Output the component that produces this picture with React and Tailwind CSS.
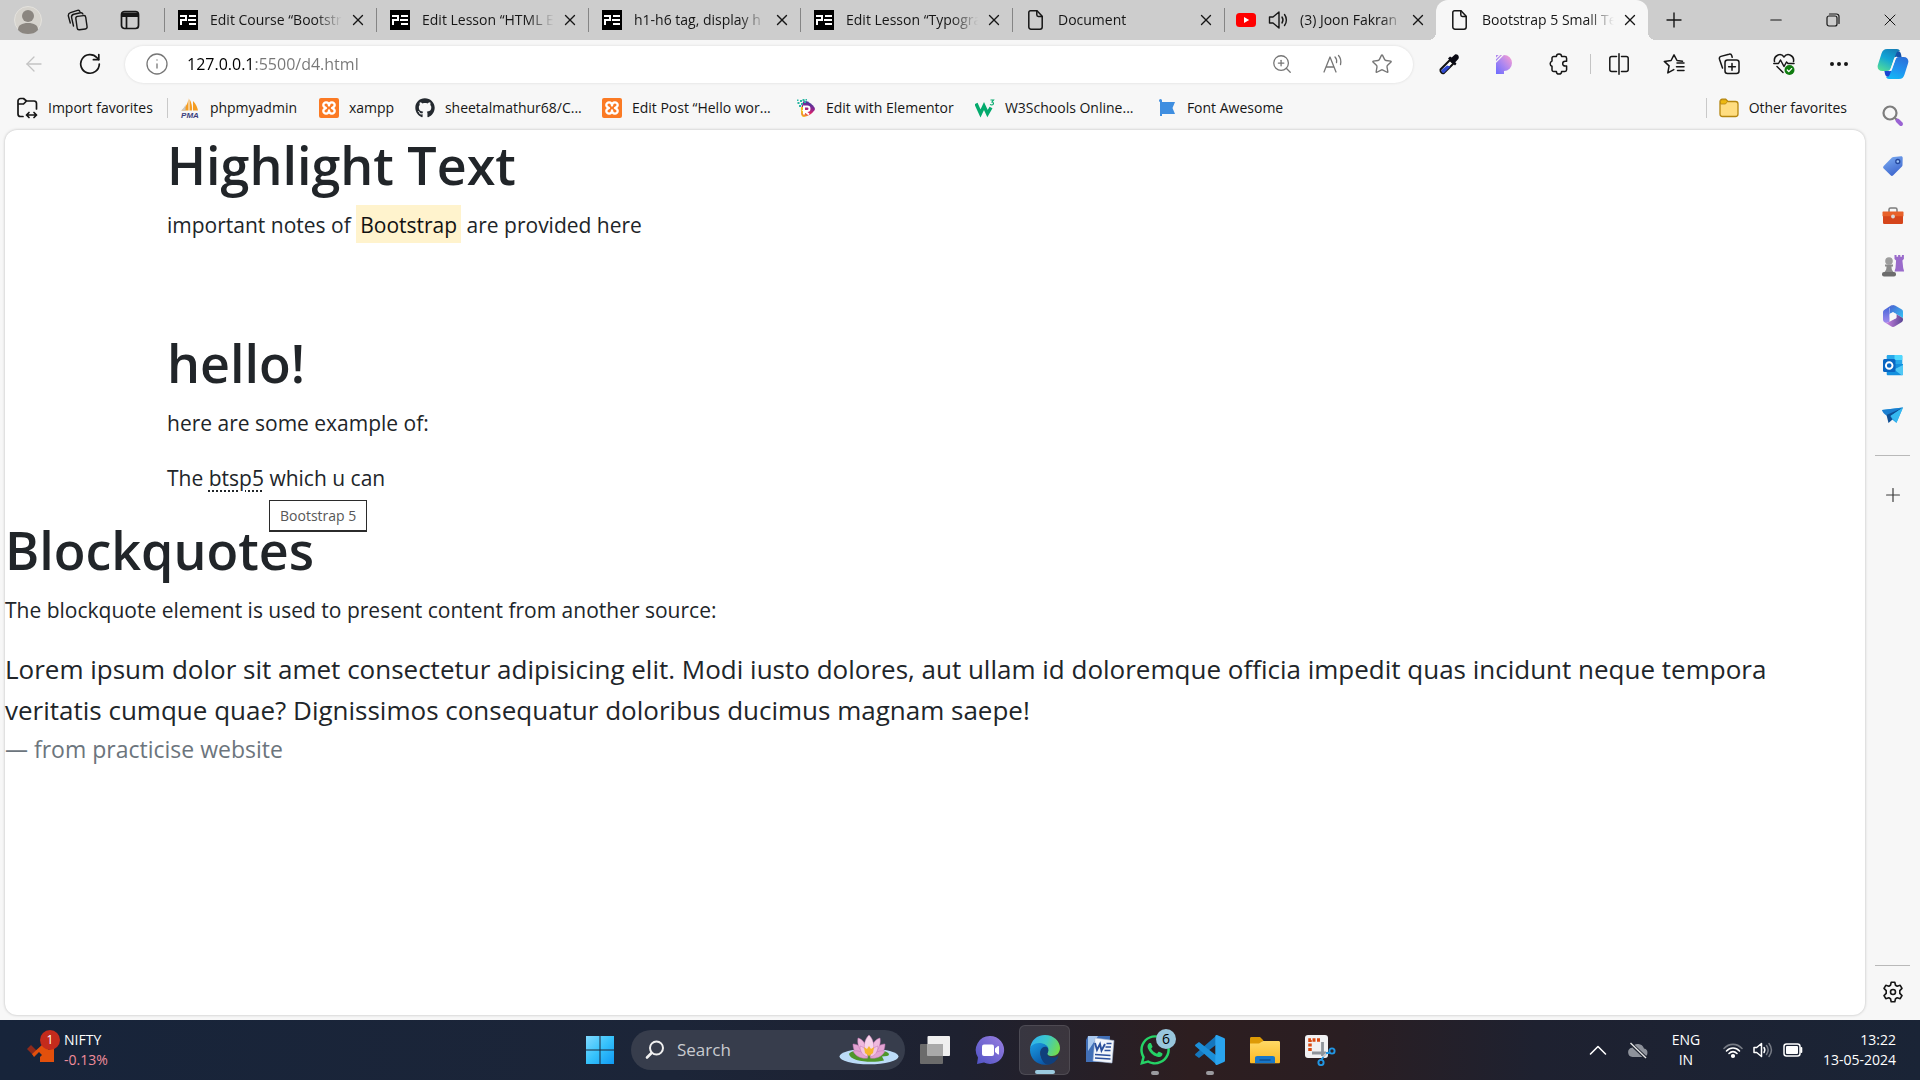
import { X, Plus, Minus, ArrowLeft, Info, ZoomIn, Star, MoreHorizontal } from "lucide-react";
import { FaGithub, FaWhatsapp } from "react-icons/fa";

const line = { fill: "none", stroke: "currentColor", strokeLinecap: "round", strokeLinejoin: "round" };

/* ---------- tab strip icons ---------- */

const Avatar = () => (
  <svg viewBox="0 0 28 28" className="size-7">
    <circle cx="14" cy="14" r="13.5" fill="#d6d3cd" stroke="#e4e2dd" />
    <circle cx="14" cy="10" r="6" fill="#8b8680" />
    <path d="M4 24c0-5 4-7 10-7s10 2 10 7c-3 3-6 4-10 4s-7-1-10-4z" fill="#8b8680" />
  </svg>
);

const Workspaces = () => (
  <svg viewBox="0 0 22 22" className="size-[22px]" {...line} strokeWidth="1.4">
    <rect x="9.5" y="7" width="10" height="13.5" rx="2" transform="rotate(-8 14 14)" />
    <path d="M6.5 17 4.6 8.600C4.300 7 5 5.600 6.800 5.200L13.500 3.800c1.200-.2 2 .2 2.400 1.200" />
    <path d="M3.300 14 1.500 7.500C1 5.600 1.700 4.200 3.500 3.600L10.500 1.400c1.200-.3 2 0 2.400 1" />
  </svg>
);

const TabActions = () => (
  <svg viewBox="0 0 20 20" className="size-5" {...line} strokeWidth="1.700">
    <rect x="1.500" y="1.500" width="17" height="17" rx="3" />
    <path d="M2 3.500h16v2.500H2z" fill="currentColor" strokeWidth="2" />
    <path d="M6.500 7v11" />
  </svg>
);

const PeLogo = () => (
  <svg viewBox="0 0 20 20" className="size-5 shrink-0">
    <rect width="20" height="20" fill="#000" />
    <path d="M2 5h7v6H4v4H2V9h5V7H2z" fill="#fff" />
    <path d="M11 5h7v2h-7zM10 9h8v2h-8zM11 13h7v2h-7z" fill="#fff" />
  </svg>
);

const PageIcon = () => (
  <svg viewBox="0 0 20 20" className="size-5 shrink-0" {...line} strokeWidth="1.500">
    <path d="M4.500.8h6.500l5.200 5.400v10.800a2.200 2.200 0 0 1-2.200 2.200H5a2.200 2.200 0 0 1-2.200-2.200V2.500c0-1 .7-1.700 1.700-1.700z" />
    <path d="M10.800 1v3.700c0 1 .6 1.700 1.600 1.700H16" />
  </svg>
);

const YouTube = () => (
  <svg viewBox="0 0 20 20" className="size-5 shrink-0">
    <rect y="3" width="20" height="14" rx="3.500" fill="#f00" />
    <path d="m8 7 5.200 3L8 13z" fill="#fff" />
  </svg>
);

const Speaker = () => (
  <svg viewBox="0 0 22 22" className="size-[22px] shrink-0" {...line} strokeWidth="1.400">
    <path d="M1.500 8v6h3.500l6 5V3L5 8z" />
    <path d="M14 8c1.200 1.800 1.200 4.200 0 6M16.500 5.500c2.500 3.200 2.500 7.800 0 11" />
  </svg>
);

/* ---------- toolbar icons ---------- */

const Reload = () => (
  <svg viewBox="0 0 22 22" className="size-[22px]" {...line} strokeWidth="1.700">
    <path d="M20.300 11A9.300 9.300 0 1 1 18 4.800l1.500 1.700" />
    <path d="M19.800 1.500v5.200h-5.400" />
  </svg>
);

const ReadAloud = () => (
  <svg viewBox="0 0 22 22" className="size-[22px]" {...line} strokeWidth="1.300">
    <path d="M2 19 8 4l6 15M4 14h8" />
    <path d="M13 4c1.500 1.500 1.900 3.500 1.500 5.500M16.500 2.500c2.200 2.500 2.800 5.500 2 9" />
  </svg>
);

const Eyedropper = () => (
  <svg viewBox="0 0 22 22" className="size-[22px]">
    <path d="M2.500 16.500 12 7l3.500 3.500-9.500 9.500c-2 1-4-1.500-3.500-3.500z" fill="#fff" stroke="#111" strokeWidth="2" />
    <path d="M3.500 17 9 12.500l3.500 1L6 20c-1.500.5-3-1.500-2.500-3z" fill="#2f49d1" />
    <path d="m10 5.500 7 7 1.500-1.700-1.200-1.600 3-3.200c1.500-2-.3-5.500-3.300-4.500l-3.300 3-1.700-1z" fill="#0a0a14" />
  </svg>
);

const PurpleP = () => (
  <svg viewBox="0 0 22 22" className="size-[22px]">
    <defs>
      <linearGradient id="pp" x1="0" y1="1" x2="1" y2="0">
        <stop offset="0" stopColor="#6a6bff" />
        <stop offset=".5" stopColor="#b088ef" />
        <stop offset="1" stopColor="#ff9fcf" />
      </linearGradient>
    </defs>
    <path d="M3 2h8a8 8 0 0 1 0 16v3H3z" fill="url(#pp)" />
    <path d="M2.500 6 7 1.500M2.500 9.500 10.500 1.500" stroke="#f7f7f7" strokeWidth="1.100" />
  </svg>
);

const Puzzle = () => (
  <svg viewBox="0 0 22 22" className="size-[22px]" {...line} strokeWidth="1.500">
    <path d="M8.400 3.600a2.600 2.600 0 0 1 5.200 0h3.300c1 0 1.700.7 1.700 1.700v3h-1.500a2.400 2.400 0 0 0 0 4.800h1.500v3.700c0 1-.7 1.700-1.700 1.700h-3.300a2.600 2.600 0 0 1-5.200 0H5.700c-1 0-1.700-.7-1.700-1.700v-3.600a2.700 2.700 0 0 1 0-5.100V5.300c0-1 .7-1.700 1.700-1.700z" />
  </svg>
);

const SplitScreen = () => (
  <svg viewBox="0 0 22 22" className="size-[22px]" {...line} strokeWidth="1.500">
    <path d="M8.500 3.500H3.800c-1.200 0-2 .8-2 2v11c0 1.200.8 2 2 2h4.700M13.500 3.500h4.700c1.200 0 2 .8 2 2v11c0 1.200-.8 2-2 2h-4.700M11 .8v20.400" />
  </svg>
);

const FavoritesIcon = () => (
  <svg viewBox="0 0 22 22" className="size-[22px]" {...line} strokeWidth="1.500">
    <path d="M19.500 8.200 14 7.500l-3-5.700-2.900 5.700-6.800.9 4.800 4.500-1.300 7 6-3.300" />
    <path d="M14 11.500h7M13.500 15.300h7.500M14.500 19h6.500" transform="translate(0 -1.500)" />
  </svg>
);

const Collections = () => (
  <svg viewBox="0 0 22 22" className="size-[22px]" {...line} strokeWidth="1.500">
    <rect x="7" y="7" width="14" height="13.500" rx="2.500" />
    <path d="M14 10.500v6.700M10.600 13.800h6.800" />
    <path d="M4.500 15 1.500 6.200c-.4-1.300.1-2.400 1.400-2.800L11 1.200c1.300-.4 2.400.2 2.800 1.500l.4 1.500" />
  </svg>
);

const Essentials = () => (
  <svg viewBox="0 0 22 22" className="size-[22px]" {...line} strokeWidth="1.500">
    <path d="M1.500 8.500c-1.200-6 6.200-9.300 9.500-4.500 3.300-4.800 10.700-1.500 9.500 4.500M4 13.500l6 6" />
    <path d="M.8 10.500h4.700L7.500 7l3.500 6.500L13.500 9l1.500 1.500h6" />
    <circle cx="16.500" cy="17" r="5" fill="#107c10" stroke="none" />
    <path d="m14.300 17 1.500 1.600 2.800-3" stroke="#fff" strokeWidth="1.300" />
  </svg>
);

const Copilot = () => (
  <svg viewBox="0 0 32 32" className="size-8">
    <defs>
      <linearGradient id="cpa" x1=".7" y1="0" x2=".2" y2="1">
        <stop offset="0" stopColor="#1680b8" />
        <stop offset=".45" stopColor="#12a5d6" />
        <stop offset="1" stopColor="#52dc98" />
      </linearGradient>
      <linearGradient id="cpb" x1=".8" y1="0" x2=".4" y2="1">
        <stop offset="0" stopColor="#2b6fd8" />
        <stop offset=".6" stopColor="#2094f0" />
        <stop offset="1" stopColor="#14b4f4" />
      </linearGradient>
    </defs>
    <path d="M19 3h1.500c2 0 3 1 3.500 3l.6 3H17z" fill="#1552a8" />
    <path d="M13 29h-1.500c-2 0-3-1-3.500-3l-.6-3H15z" fill="#1a46d2" />
    <path d="M10 1h10c1.500 0 2.300.8 3 2-2-.3-3.400 1-4 3l-5 13.500c-.8 2.500-2 3.500-4 3.500H5.500c-4 0-5.700-3-4.500-6.500L4.500 5.500C5.500 2.500 7 1 10 1z" fill="url(#cpa)" />
    <path d="M22 31H12c-1.500 0-2.300-.8-3-2 2 .3 3.400-1 4-3l5-13.500C18.800 10 20 9 22 9h4.500c4 0 5.700 3 4.500 6.500l-3.500 11c-1 3-2.500 4.500-5.500 4.500z" fill="url(#cpb)" />
    <path d="M17 10.500c.5-1.200 1.600-1.700 3.200-1.700l-1.400 2-3.800 10.700c-.4 1.200-1.200 1.700-2.700 1.700l1.300-2z" fill="#f7f7f7" />
  </svg>
);

/* ---------- favorites bar icons ---------- */

const ImportFolder = () => (
  <svg viewBox="0 0 22 22" className="size-[22px] shrink-0" {...line} strokeWidth="1.700">
    <path d="M7 19.500H4.500a2.500 2.500 0 0 1-2.500-2.500V4a2.500 2.500 0 0 1 2.500-2.500h3l3 2.500H18a2.500 2.500 0 0 1 2.500 2.500V12M2 7h5.500l2.500-2.500" />
    <path d="M10.500 18h10M13 15.500 10.500 18l2.500 2.500M18 15.500l2.500 2.500-2.500 2.500" />
  </svg>
);

const PhpMyAdmin = () => (
  <svg viewBox="0 0 20 20" className="size-5 shrink-0">
    <path d="M8.500 0C8 6 5 10 1.500 12.500h7zM9.500 1c2 3.500 3 8 2.500 11.500H9.500zM13 3c3 3 4.500 6.500 5 9.500h-5z" fill="#f59d22" />
    <path d="M5.500 6C5 9 3 11 1 12.500h4.500z" fill="#c9c6bd" />
    <text x="10" y="19.500" textAnchor="middle" fontSize="8" fontWeight="700" fontStyle="italic" fill="#3d3f7c" fontFamily="Liberation Sans, sans-serif">PMA</text>
  </svg>
);

const Xampp = () => (
  <svg viewBox="0 0 20 20" className="size-5 shrink-0">
    <rect width="20" height="20" rx="2" fill="#fb7a24" />
    <path
      d="M10 7.500C10 3.500 4.300 3.500 4.300 7c0 1.500 1 2.200 2.700 3-1.700.8-2.700 1.500-2.700 3 0 3.500 5.700 3.500 5.700-.5 0 4 5.700 4 5.700.5 0-1.500-1-2.200-2.700-3 1.700-.8 2.700-1.500 2.700-3 0-3.500-5.700-3.500-5.700.5z"
      fill="none"
      stroke="#fff"
      strokeWidth="2.300"
      strokeLinejoin="round"
    />
  </svg>
);

const Elementor = () => (
  <svg viewBox="0 0 20 20" className="size-5 shrink-0">
    <defs>
      <linearGradient id="el" x1=".6" y1="0" x2=".3" y2="1">
        <stop offset="0" stopColor="#2d3f9e" />
        <stop offset=".4" stopColor="#8a2390" />
        <stop offset=".7" stopColor="#dd2466" />
        <stop offset="1" stopColor="#f6b21b" />
      </linearGradient>
    </defs>
    <path d="M8 2.500c5 1 8.500 4 10.500 7 .5 1 .5 2 0 2.800-2 3-6 6-10.500 6.700-2 0-3-2-3-4L6 6z" fill="url(#el)" />
    <path d="M5 9h2v6l-1 1.500c-1-2-1.500-5-1-7.500z" fill="#f0c020" />
    <path d="M1.500 4h2v2h-2zM4 2h2v2H4zM6.500 1h2v2h-2zM3 7h2v2H3zM5 5h2v2H5zM8 3h2v2H8zM1 1.500h1.500V3H1zM9.500 1H11v1.500H9.500z" fill="#2cb7a4" />
    <path d="M8 16.500V8.500h3.200a2.300 2.300 0 0 1 0 4.600H8.500l4.500 3.400" fill="none" stroke="#fff" strokeWidth="2" />
  </svg>
);

const W3 = () => (
  <svg viewBox="0 0 20 20" className="size-5 shrink-0">
    <path d="m1 5.500 4.500 10L9 8l3.500 7.500L16 9.500" fill="none" stroke="#04aa6d" strokeWidth="3.400" />
    <path d="M15.500 2h3l-1.500 2c2 .2 2 3-.3 3-.7 0-1.200-.2-1.500-.8" fill="none" stroke="#04aa6d" strokeWidth="1.200" />
  </svg>
);

const Flag = () => (
  <svg viewBox="0 0 20 20" className="size-5 shrink-0">
    <path d="M2 2.500a1.500 1.500 0 0 1 3 0V4h13l-2.500 6 2.500 6H5v2H3V4a1.500 1.500 0 0 1-1-1.500z" fill="#3f8ee0" />
  </svg>
);

const YellowFolder = () => (
  <svg viewBox="0 0 20 20" className="size-5 shrink-0">
    <path d="M1 5V3.500A2.300 2.300 0 0 1 3.300 1.200h3.400L9 3.500h7.500A2.500 2.500 0 0 1 19 6v10a2.500 2.500 0 0 1-2.500 2.500h-13A2.500 2.500 0 0 1 1 16z" fill="#ffdd80" stroke="#b5860f" strokeWidth="1.300" />
    <path d="M1.500 6V3.500c0-1 .8-1.800 1.800-1.800h3.200L8.500 3.500 6.500 6z" fill="#edb80f" stroke="#b5860f" strokeWidth=".8" />
  </svg>
);

/* ---------- sidebar icons ---------- */

const SideSearch = () => (
  <svg viewBox="0 0 22 22" className="size-[22px]">
    <path d="m13 13 2 2" stroke="#7d7d7d" strokeWidth="2.200" />
    <path d="m15.500 15.500 3.500 3.500" stroke="#9a63d3" strokeWidth="4" strokeLinecap="round" />
    <circle cx="8" cy="8" r="6.500" fill="none" stroke="#7d7d7d" strokeWidth="2.200" />
  </svg>
);

const Tag = () => (
  <svg viewBox="0 0 22 22" className="size-[22px]">
    <defs>
      <linearGradient id="tg" x1="0" y1="0" x2=".5" y2="1">
        <stop offset="0" stopColor="#7fb0f3" />
        <stop offset="1" stopColor="#3f68cf" />
      </linearGradient>
    </defs>
    <path d="M11.500 2 19 1.300c1.200 0 1.700.6 1.700 1.700L20.500 10c0 .6-.3 1.300-.8 1.800l-8.500 8.500c-.8.800-1.800.8-2.600 0L1.700 13.500c-.8-.8-.8-1.800 0-2.600L10 2.600c.4-.4.9-.6 1.500-.6z" fill="url(#tg)" />
    <circle cx="15.800" cy="6.500" r="2" fill="#9cc3f8" stroke="#24479c" strokeWidth="1.300" />
  </svg>
);

const Toolbox = () => (
  <svg viewBox="0 0 22 22" className="size-[22px]">
    <path d="M7 7V4.500c0-1 .6-1.600 1.600-1.600h4.800c1 0 1.600.6 1.600 1.600V7" fill="none" stroke="#7c7c7c" strokeWidth="1.500" />
    <path d="M1 11h20v6.500c0 1-.6 1.600-1.600 1.600H2.600c-1 0-1.600-.6-1.600-1.600z" fill="#d5451b" />
    <path d="M1.500 6.500h19c.6 0 1 .4 1 1v3.700H.5V7.500c0-.6.4-1 1-1z" fill="#e8612a" />
    <circle cx="11" cy="11.500" r="1.900" fill="#d8d8d8" />
  </svg>
);

const Chess = () => (
  <svg viewBox="0 0 22 22" className="size-[22px]">
    <path d="M12.500 0h2v1.800h1.600V0h2.200v1.800h1.600V0h2v4l-1.500 1.500.8 7.500 1 3.500H12.500l1-3.500.6-7.500L12.500 4z" fill="#9a6bcb" />
    <circle cx="7" cy="6" r="3.800" fill="#9d9d9d" />
    <path d="M3 9.500h8v2H9.500c0 2.500.5 4 2 5.500H2.500c1.500-1.500 2-3 2-5.500H3z" fill="#8b8b8b" />
    <rect y="17" width="14" height="4.500" rx="2" fill="#6c6c6c" />
  </svg>
);

const M365 = () => (
  <svg viewBox="0 0 22 22" className="size-[22px]">
    <defs>
      <linearGradient id="m1" x1="0" y1="0" x2="1" y2="1">
        <stop offset="0" stopColor="#4b5fd0" />
        <stop offset="1" stopColor="#33c5f6" />
      </linearGradient>
      <linearGradient id="m2" x1="0" y1="0" x2="1" y2="0">
        <stop offset="0" stopColor="#cf86e4" />
        <stop offset="1" stopColor="#5a4594" />
      </linearGradient>
      <linearGradient id="m3" x1="0" y1="0" x2="0" y2="1">
        <stop offset="0" stopColor="#3a63d6" />
        <stop offset="1" stopColor="#a58bee" />
      </linearGradient>
    </defs>
    <path d="M11 0c.7 0 1.300.2 2 .6l6.500 3.700c1 .6 1.500 1.400 1.500 2.700v6l-6-3.500L11 7 7.500 9 8 2z" fill="url(#m1)" />
    <path d="M11 0 8.500 2C7.800 2.700 7.500 3.300 7.500 4.500V17L4 18l-1.500-.8C1.500 16.500 1 15.700 1 14.500V7.500c0-1.200.5-2 1.500-2.700L9 .6C9.700.2 10.300 0 11 0z" fill="url(#m3)" />
    <path d="M3 17.500c1.500.5 3 .2 4.500-.8L14.500 13V9.200L20 12.500c1 .7 1 1.200 1 2 0 1.200-.5 2-1.500 2.700L13 21.300c-1.300.8-2.700.8-4 0z" fill="url(#m2)" />
    <circle cx="11" cy="11" r="3.300" fill="#f7f7f7" />
  </svg>
);

const Outlook = () => (
  <svg viewBox="0 0 22 22" className="size-[22px]">
    <path d="M6 0h13c.8 0 1.300.5 1.300 1.300V10H4.700V1.300C4.700.5 5.200 0 6 0z" fill="#28a8ea" />
    <path d="M12.500 0H19c.8 0 1.300.5 1.300 1.300V5h-7.800z" fill="#50d9ff" />
    <path d="M4.700 9H21v10c0 .8-.5 1.300-1.300 1.300H6c-.8 0-1.300-.5-1.300-1.300z" fill="#1490df" />
    <path d="M21 10v9c0 .8-.4 1.300-1.300 1.300L12 14.500z" fill="#50c8f5" />
    <rect x="1" y="4" width="12.500" height="13" rx="1.500" fill="#0a66c2" />
    <circle cx="7.200" cy="10.500" r="3.300" fill="none" stroke="#fff" strokeWidth="1.900" />
  </svg>
);

const Plane = () => (
  <svg viewBox="0 0 22 22" className="size-[22px]">
    <path d="m0 5 21-2.500L14.500 18l-5-4z" fill="#2aa5e8" />
    <path d="M0 5c.5 2 2 4 4.500 5.500L21 2.500z" fill="#1b7fd0" />
    <path d="m4.500 10 2 8 4-3.500L8.500 11 21 2.500z" fill="#0f4f94" />
    <path d="M21 2.500 8.500 11l6 6.500z" fill="#36b9f0" />
  </svg>
);

const Gear = () => (
  <svg viewBox="0 0 22 22" className="size-[22px]" {...line} strokeWidth="1.600">
    <path d="M9.200 1.200h3.600l.7 3 1.700 1 3-.9 1.800 3.100-2.200 2.200v2.800l2.200 2.200-1.800 3.100-3-.9-1.700 1-.7 3H9.200l-.7-3-1.700-1-3 .9L2 14.600l2.200-2.200V9.600L2 7.400l1.800-3.100 3 .9 1.700-1z" />
    <circle cx="11" cy="11" r="2.500" />
  </svg>
);

/* ---------- taskbar icons ---------- */

const Stocks = () => (
  <svg viewBox="0 0 32 30" className="h-[30px] w-8">
    <path d="m1 14 4-4 6 6-4 4z" fill="#8e2a1b" />
    <path d="m6 19 11-10 6 6 5-4v16H14v-5l2-2-3-3-5 5z" fill="#e2500c" />
  </svg>
);

const Start = () => (
  <svg viewBox="0 0 30 30" className="size-[30px]">
    <defs>
      <linearGradient id="wn" gradientUnits="userSpaceOnUse" x1="0" y1="0" x2="30" y2="30">
        <stop offset="0" stopColor="#86dbff" />
        <stop offset=".5" stopColor="#36c2fb" />
        <stop offset="1" stopColor="#0d96f2" />
      </linearGradient>
    </defs>
    <path d="M1 1h13.500v13.500H1zM15.500 1H29v13.500H15.500zM1 15.500h13.500V29H1zM15.500 15.500H29V29H15.500z" fill="url(#wn)" />
  </svg>
);

const SearchGlass = () => (
  <svg viewBox="0 0 20 20" className="size-5 shrink-0" {...line} strokeWidth="2">
    <circle cx="11.500" cy="8" r="6.500" />
    <path d="M6.500 13 2 17.500" strokeWidth="2.600" />
  </svg>
);

const Lotus = () => (
  <svg viewBox="0 0 60 32" className="h-8 w-[60px] shrink-0">
    <ellipse cx="30" cy="22.500" rx="29.500" ry="7.800" fill="#bcdcf8" />
    <path d="M10 20c2-6 38-6 40 0 0 1-1 2-2 2l-5 .5 2 4c-12 3-34 1-35-6.500z" fill="#4f962b" />
    <g fill="#e3a3d3" stroke="#c274b5" strokeWidth=".5">
      <path d="M14 10c5 0 10 4 13 10l-6 2c-4-2-7-6-7-12zM46 10c-5 0-10 4-13 10l6 2c4-2 7-6 7-12z" />
      <path d="M14 17c5-1 11 1 15 7-6 1-12-1-15-7zM46 17c-5-1-11 1-15 7 6 1 12-1 15-7z" />
      <path d="M19 4c4 1 8 5 10 14l-5 1c-4-4-6-9-5-15zM41 4c-4 1-8 5-10 14l5 1c4-4 6-9 5-15z" fill="#efb9dd" />
      <path d="M30 1c-4 4-6 10-4 17h8c2-7 0-13-4-17z" fill="#f8d4ea" />
      <path d="M21 12c4 1 7 4 8 11-5-1-8-5-8-11zM39 12c-4 1-7 4-8 11 5-1 8-5 8-11z" fill="#f3c4e2" />
    </g>
    <path d="m25 13 3 2 2-3 2 3 3-2-1 6-4 3-4-3z" fill="#f5b62e" />
  </svg>
);

const TaskView = () => (
  <svg viewBox="0 0 32 30" className="h-[30px] w-8">
    <rect x="1" y="9" width="23" height="20" rx="1" fill="#6b6b6b" />
    <rect x="8.500" y="1" width="22.500" height="20" rx="1" fill="#efefef" />
    <path d="M8.500 9H24v12H8.500z" fill="#a9a9a9" />
  </svg>
);

const Chat = () => (
  <svg viewBox="0 0 30 30" className="size-[30px]">
    <defs>
      <linearGradient id="ch" x1="1" y1="0" x2="0" y2="1">
        <stop offset="0" stopColor="#9a7fe0" />
        <stop offset="1" stopColor="#4f52c4" />
      </linearGradient>
    </defs>
    <path d="M15 1a14 14 0 1 1-6 26.600L2 29l1-6.500A14 14 0 0 1 15 1z" fill="url(#ch)" />
    <rect x="7" y="9.500" width="12" height="11.500" rx="2" fill="#fff" />
    <path d="m20 13.500 3-2.500c.5-.3 1 0 1 .5v7.500c0 .5-.5.8-1 .5l-3-2.500z" fill="#fff" />
  </svg>
);

const Edge = () => (
  <svg viewBox="0 0 30 30" className="size-[30px]">
    <defs>
      <linearGradient id="ea" x1="0" y1=".3" x2="1" y2=".6">
        <stop offset="0" stopColor="#2fb1f0" />
        <stop offset=".5" stopColor="#3cc8c8" />
        <stop offset="1" stopColor="#74dc4b" />
      </linearGradient>
      <linearGradient id="eb" x1="0" y1="0" x2=".6" y2="1">
        <stop offset="0" stopColor="#1b9de2" />
        <stop offset="1" stopColor="#0a57a8" />
      </linearGradient>
    </defs>
    <path d="M0 14C1 5 7 0 15 0c9 0 15 6.500 15 13 0 5-3.500 8-8 8-3.500 0-5.500-1.500-4.500-3 2.500-4-1-9-7-9C5 9 1 11 0 14z" fill="url(#ea)" />
    <path d="M0 15C0 11 4 8 9 8c5 0 9 2.500 9.500 6-5-3-9 1-8 6 1 5 5 8.500 9.500 9C9 32 0 25 0 15z" fill="url(#eb)" />
    <path d="M10.500 19c-1-5 2.500-8 6-7 2 1 2.500 4 1 6-1 1.500 1 4.500 5.500 4.500 2 0 3.500-.5 4.500-1.500.5-.3 1 .2.700.7C26 26.500 22.500 29.500 18 29.500c-4 0-7-5-7.500-10.500z" fill="#103f7c" />
  </svg>
);

const Word = () => (
  <svg viewBox="0 0 30 30" className="size-[30px]">
    <path d="M3 1h22l-1 26L1 27V5z" fill="#416fb6" />
    <path d="M3 1h10L3 16z" fill="#a9c8ee" />
    <path d="M10 3l19 2.500-2 22.500L8 26z" fill="#f3f6fb" stroke="#9fb4d4" strokeWidth=".6" />
    <path d="m10 8 2 7 3-6 1.500 6.500L20 9" fill="none" stroke="#2a4f9c" strokeWidth="1.900" />
    <path d="M21.500 8.500h5M20.500 12h5.500M19.500 15.500h6M10 19.500l15.500 1M10 23l15.500 1" stroke="#2a4f9c" strokeWidth="1.500" />
  </svg>
);

const VsCode = () => (
  <svg viewBox="0 0 30 30" className="size-[30px]">
    <path d="M22 0v9L4 23l-3.500-2.500c-.6-.5-.6-1.300 0-1.800z" fill="#1577bd" />
    <path d="M22 30v-9L4 7 .5 9.500c-.6.500-.6 1.300 0 1.800z" fill="#1c8fd8" />
    <path d="M22 0 29 3c.7.300 1 .8 1 1.500v21c0 .7-.3 1.200-1 1.500l-7 3c-1 .2-1.700-.5-1.700-1.200V1.200C20.300.4 21 0 22 0z" fill="#2aa4ee" />
  </svg>
);

const Explorer = () => (
  <svg viewBox="0 0 30 30" className="size-[30px]">
    <defs>
      <linearGradient id="ex" x1="0" y1="0" x2="0" y2="1">
        <stop offset="0" stopColor="#ffd965" />
        <stop offset="1" stopColor="#fcb924" />
      </linearGradient>
    </defs>
    <path d="M0 3.500C0 2.500.6 2 1.500 2H10l3.500 3.500L10 10H0z" fill="#dd9a05" />
    <path d="M0 8.500h9L13 6h15.500c1 0 1.500.6 1.500 1.500V27c0 .8-.5 1.300-1.300 1.300H1.300C.5 28.300 0 27.800 0 27z" fill="url(#ex)" />
    <path d="M5 28.300v-5c0-1.500.8-2.300 2.300-2.300h15.400c1.500 0 2.300.8 2.300 2.300v5z" fill="#1877c9" />
    <path d="M9.500 25h11" stroke="#0b4f92" strokeWidth="1.500" />
  </svg>
);

const Snip = () => (
  <svg viewBox="0 0 32 32" className="size-8">
    <rect x="1" y="1" width="23" height="23" rx="3" fill="#f1f1f3" />
    <path d="M6 17V6h11.500" fill="none" stroke="#d9480f" strokeWidth="3.500" strokeDasharray="3 1.500" />
    <path d="M18.500 8v14M8 19h14" stroke="#8f949b" strokeWidth="2.800" />
    <path d="m19 23 5-5" stroke="#c5cad1" strokeWidth="2" />
    <circle cx="28" cy="17" r="2.600" fill="none" stroke="#2196e3" strokeWidth="1.900" />
    <circle cx="17" cy="28.500" r="2.600" fill="none" stroke="#2196e3" strokeWidth="1.900" />
    <path d="m17.500 25.500 2-2.500M22 19h3.500" stroke="#2196e3" strokeWidth="1.900" />
  </svg>
);

const ChevronUp = () => (
  <svg viewBox="0 0 18 18" className="size-[18px]" {...line} strokeWidth="1.600">
    <path d="m1.500 13 7.500-7.500 7.500 7.500" />
  </svg>
);

const CloudOff = () => (
  <svg viewBox="0 0 22 22" className="size-[22px]">
    <path d="M5.500 18a4.700 4.700 0 0 1-.6-9.300A6.500 6.500 0 0 1 17 9.500a4.300 4.300 0 0 1-.5 8.500z" fill="#8e929b" />
    <path d="m3 4 16 15" stroke="#1e2330" strokeWidth="3.500" />
    <path d="m3.500 4 15.500 15" stroke="#e6e6e6" strokeWidth="1.400" />
  </svg>
);

const Wifi = () => (
  <svg viewBox="0 0 20 20" className="size-5" {...line} strokeWidth="1.600">
    <path d="M1 8.500c5-5.500 13-5.500 18 0" opacity=".4" />
    <path d="M3.500 11c3.700-4 9.300-4 13 0M6 13.500c2.400-2.500 5.600-2.500 8 0" />
    <circle cx="10" cy="16" r="1.300" fill="currentColor" />
  </svg>
);

const Volume = () => (
  <svg viewBox="0 0 20 20" className="size-5" {...line} strokeWidth="1.500">
    <path d="M1 7.500v5h2.700l4.800 4v-13l-4.800 4zM11 7.500c1 1.500 1 3.500 0 5" />
    <path d="M13.500 5.500c2 2.700 2 6.300 0 9M16 3.500c3 4 3 9 0 13" opacity=".4" />
  </svg>
);

const Battery = () => (
  <svg viewBox="0 0 20 20" className="size-5" {...line} strokeWidth="1.500">
    <rect x="1" y="4" width="16" height="12" rx="2.500" />
    <rect x="3" y="6" width="12" height="8" rx="1" fill="currentColor" stroke="none" />
    <path d="M18.300 8v4" strokeWidth="2" />
  </svg>
);

/* ---------- data ---------- */

const tabs = [
  { icon: PeLogo, title: "Edit Course “Bootstr" },
  { icon: PeLogo, title: "Edit Lesson “HTML E" },
  { icon: PeLogo, title: "h1-h6 tag, display h" },
  { icon: PeLogo, title: "Edit Lesson “Typogra" },
  { icon: PageIcon, title: "Document" },
  { icon: YouTube, title: "(3) Joon Fakran", audio: true },
  { icon: PageIcon, title: "Bootstrap 5 Small Te", active: true },
];

const bookmarks = [
  { icon: PhpMyAdmin, label: "phpmyadmin", width: "w-[139px]" },
  { icon: Xampp, label: "xampp", width: "w-[96px]" },
  { icon: () => <FaGithub className="size-5 shrink-0 text-[#24292f]" />, label: "sheetalmathur68/C...", width: "w-[187px]" },
  { icon: Xampp, label: "Edit Post “Hello wor...", width: "w-[194px]" },
  { icon: Elementor, label: "Edit with Elementor", width: "w-[179px]" },
  { icon: W3, label: "W3Schools Online...", width: "w-[182px]" },
  { icon: Flag, label: "Font Awesome", width: "w-[150px]" },
];

const tools = [
  { icon: SplitScreen, label: "Split screen" },
  { icon: FavoritesIcon, label: "Favorites" },
  { icon: Collections, label: "Collections" },
  { icon: Essentials, label: "Browser essentials" },
  { icon: () => <MoreHorizontal className="size-6" strokeWidth={2} />, label: "Settings and more" },
];

const extensions = [
  { icon: Eyedropper, label: "Color picker" },
  { icon: PurpleP, label: "Page extension" },
  { icon: Puzzle, label: "Extensions" },
];

const sideApps = [
  { icon: SideSearch, label: "Search" },
  { icon: Tag, label: "Shopping" },
  { icon: Toolbox, label: "Tools" },
  { icon: Chess, label: "Games" },
  { icon: M365, label: "Microsoft 365" },
  { icon: Outlook, label: "Outlook" },
  { icon: Plane, label: "Drop" },
];

const taskApps = [
  { icon: TaskView, label: "Task View" },
  { icon: Chat, label: "Chat" },
  { icon: Edge, label: "Microsoft Edge", active: true },
  { icon: Word, label: "Word" },
  { icon: () => <FaWhatsapp className="size-[34px] text-[#25d366]" />, label: "WhatsApp", badge: "6", running: true },
  { icon: VsCode, label: "Visual Studio Code", running: true },
  { icon: Explorer, label: "File Explorer" },
  { icon: Snip, label: "Snipping Tool" },
];

/* ---------- parts ---------- */

function IconButton({ icon: Icon, label, className = "" }) {
  return (
    <button type="button" aria-label={label} className={"flex shrink-0 items-center justify-center " + className}>
      <Icon />
    </button>
  );
}

function Tab({ icon: Icon, title, active, audio }) {
  return (
    <div
      role="tab"
      aria-selected={!!active}
      className={
        "relative flex h-10 max-w-[212px] min-w-0 flex-1 items-center pr-1.5 " +
        (audio ? "pl-3 " : "pl-3.5 ") +
        (active ? "rounded-t-xl bg-[#f7f7f7]" : "")
      }
    >
      {!active && <span className="absolute top-2 left-0 h-6 w-px bg-[#858585]" />}
      {active && (
        <>
          <span className="absolute bottom-0 -left-2 size-2 bg-[radial-gradient(circle_at_0_0,transparent_8px,#f7f7f7_8px)]" />
          <span className="absolute -right-2 bottom-0 size-2 bg-[radial-gradient(circle_at_100%_0,transparent_8px,#f7f7f7_8px)]" />
        </>
      )}
      <Icon />
      {audio && (
        <span className="ml-3 flex">
          <Speaker />
        </span>
      )}
      <span
        className={
          "min-w-0 flex-1 overflow-hidden whitespace-nowrap [mask-image:linear-gradient(to_right,#000_80%,transparent)] " +
          (audio ? "ml-2.5" : "ml-3")
        }
      >
        {title}
      </span>
      <button type="button" aria-label={"Close " + title} className="ml-1 flex size-6 shrink-0 items-center justify-center">
        <X className="size-[18px]" strokeWidth={1.8} />
      </button>
    </div>
  );
}

function TabStrip() {
  return (
    <header className="flex h-10 items-center bg-[#cdcdcd]">
      <IconButton icon={Avatar} label="Profile" className="ml-3.5 w-7" />
      <IconButton icon={Workspaces} label="Workspaces" className="ml-6 w-6" />
      <IconButton icon={TabActions} label="Tab actions" className="ml-7 w-6" />
      <div role="tablist" className="ml-[22px] flex min-w-0 flex-1">
        {tabs.map((t) => (
          <Tab key={t.title} {...t} />
        ))}
        <button type="button" aria-label="New tab" className="ml-3.5 flex h-10 w-6 shrink-0 items-center justify-center">
          <Plus className="size-6" strokeWidth={1.4} />
        </button>
      </div>
      <button type="button" aria-label="Minimize" className="flex w-[57px] justify-center">
        <Minus className="size-[18px]" strokeWidth={1.4} />
      </button>
      <button type="button" aria-label="Restore" className="flex w-[57px] justify-center">
        <svg viewBox="0 0 14 14" className="size-3.5" {...line} strokeWidth="1.200">
          <rect x="1" y="3" width="10" height="10" rx="2" />
          <path d="M3.500 1h7A2.500 2.500 0 0 1 13 3.500v7" />
        </svg>
      </button>
      <button type="button" aria-label="Close window" className="mr-0.5 flex w-[57px] justify-center">
        <X className="size-5" strokeWidth={1.2} />
      </button>
    </header>
  );
}

function Toolbar() {
  return (
    <div className="flex h-12 items-center">
      <button type="button" aria-label="Back" className="ml-[22px] flex w-6 text-[#c3c3c3]">
        <ArrowLeft className="size-6" strokeWidth={1.3} />
      </button>
      <IconButton icon={Reload} label="Refresh" className="ml-8 w-6" />
      <div className="ml-[23px] flex h-[37px] min-w-0 flex-1 items-center rounded-full bg-white pr-5 pl-5 text-[#767676] shadow-[0_0_3px_rgba(0,0,0,0.12)]">
        <button type="button" aria-label="Site information">
          <Info className="size-6" strokeWidth={1.3} />
        </button>
        <input
          aria-label="Address"
          defaultValue="127.0.0.1:5500/d4.html"
          className="ml-[18px] min-w-0 flex-1 bg-[linear-gradient(to_right,#000_68px,#767676_68px)] bg-clip-text text-base text-transparent outline-none"
        />
        <button type="button" aria-label="Zoom">
          <ZoomIn className="size-[22px]" strokeWidth={1.4} />
        </button>
        <IconButton icon={ReadAloud} label="Read aloud" className="ml-7 w-6" />
        <button type="button" aria-label="Add to favorites" className="ml-[26px]">
          <Star className="size-[22px]" strokeWidth={1.5} />
        </button>
      </div>
      <div className="ml-2 flex items-center">
        {extensions.map((t) => (
          <IconButton key={t.label} icon={t.icon} label={t.label} className="w-[55px]" />
        ))}
        <span className="ml-1 h-5 w-px bg-[#c4c4c4]" />
        {tools.map((t) => (
          <IconButton key={t.label} icon={t.icon} label={t.label} className="w-[55px]" />
        ))}
        <IconButton icon={Copilot} label="Copilot" className="w-[54px]" />
      </div>
    </div>
  );
}

function FavoritesBar() {
  return (
    <nav aria-label="Favorites" className="flex h-[42px] items-center pb-0.5 pl-4">
      <button type="button" className="flex items-center gap-2.5 whitespace-nowrap">
        <ImportFolder />
        Import favorites
      </button>
      <span className="mr-3 ml-3.5 h-5 w-px bg-[#c9c9c9]" />
      {bookmarks.map(({ icon: Icon, label, width }) => (
        <a key={label} href="#" className={"flex items-center gap-2.5 whitespace-nowrap " + width}>
          <Icon />
          {label}
        </a>
      ))}
      <span className="mr-3 ml-auto h-5 w-px bg-[#c9c9c9]" />
      <button type="button" className="mr-[18px] flex items-center gap-2.5 whitespace-nowrap">
        <YellowFolder />
        Other favorites
      </button>
    </nav>
  );
}

function Sidebar() {
  return (
    <aside className="flex w-[55px] shrink-0 flex-col items-center pt-[3px]">
      {sideApps.map((a) => (
        <IconButton key={a.label} icon={a.icon} label={a.label} className="h-[50px] w-full" />
      ))}
      <hr className="mt-3.5 w-[35px] border-[#b9b9b9]" />
      <button type="button" aria-label="Customize" className="mt-7 text-[#3a3a3a]">
        <Plus className="size-[22px]" strokeWidth={1.3} />
      </button>
      <hr className="mt-auto w-[35px] border-[#b9b9b9]" />
      <IconButton icon={Gear} label="Sidebar settings" className="mb-0.5 h-[52px] w-full" />
    </aside>
  );
}

function Page() {
  const h1 = "text-[52px] leading-[66px] font-semibold mb-[11px]";
  const p = "mb-[22px]";
  return (
    <main className="min-w-0 flex-1 rounded-xl bg-white pt-0.5 text-[21px] leading-[33px] text-[#212529] shadow-[0_0_3px_rgba(0,0,0,0.25)]">
      <div className="mx-auto max-w-[1568px] px-4">
        <h1 className={h1}>Highlight Text</h1>
        <p className={p}>
          important notes of <mark className="bg-[#fff3cd] px-1 pt-1.5 pb-1 text-[#111]">Bootstrap</mark> are provided here
        </p>
        <h1 className={h1 + " mt-[88px]"}>hello!</h1>
        <p className={p}>here are some example of:</p>
        <p className={p + " relative"}>
          The{" "}
          <abbr className="underline decoration-dotted decoration-2 underline-offset-4" aria-describedby="tip">
            btsp5
          </abbr>{" "}
          which u can
          <span
            id="tip"
            role="tooltip"
            className="absolute top-[38px] left-[102px] border border-b-2 border-[#2b2b2b] bg-white px-2.5 text-sm leading-[29px] whitespace-nowrap text-[#575757]"
          >
            Bootstrap 5
          </span>
        </p>
      </div>
      <h1 className={h1}>Blockquotes</h1>
      <p className={p}>The blockquote element is used to present content from another source:</p>
      <blockquote className="text-[26px] leading-[41px]">
        Lorem ipsum dolor sit amet consectetur adipisicing elit. Modi iusto dolores, aut ullam id doloremque officia impedit quas
        incidunt neque tempora veritatis cumque quae? Dignissimos consequatur doloribus ducimus magnam saepe!
        <footer className="text-[23px] leading-9 text-[#6c757d]">— from practicise website</footer>
      </blockquote>
    </main>
  );
}

function Taskbar() {
  return (
    <footer className="grid h-[60px] grid-cols-[1fr_auto_1fr] items-center bg-[linear-gradient(to_right,#17243a_0%,#1c2538_35%,#1e2130_50%,#2d1e20_62%,#2a1e22_70%,#1e2130_80%,#1a2436_100%)] text-sm text-white">
      <button type="button" className="relative ml-[26px] flex items-center gap-1.5 justify-self-start text-left">
        <Stocks />
        <span className="absolute top-0 left-3.5 flex size-5 items-center justify-center rounded-full bg-[#c42b1c] text-xs">1</span>
        <span className="leading-5">
          <span className="block">NIFTY</span>
          <span className="block text-[#f08c9a]">-0.13%</span>
        </span>
      </button>
      <div className="flex items-center pl-3">
        <IconButton icon={Start} label="Start" className="mr-4 w-[30px]" />
        <label className="mr-0.5 flex h-10 w-[274px] items-center rounded-full bg-[#373d4c] pr-1.5 pl-3.5 text-[#f0f0f0]">
          <SearchGlass />
          <input type="search" placeholder="Search" aria-label="Search" className="ml-3 min-w-0 flex-1 bg-transparent text-[17px] outline-none placeholder:text-[#c9cbd0]" />
          <Lotus />
        </label>
        {taskApps.map(({ icon: Icon, label, active, running, badge }) => (
          <button
            key={label}
            type="button"
            aria-label={label}
            className={
              "relative mx-[2px] flex h-[50px] w-[51px] items-center justify-center rounded-md " +
              (active ? "border border-white/10 bg-white/10" : "")
            }
          >
            <Icon />
            {badge && (
              <span className="absolute top-1 right-1 flex size-5 items-center justify-center rounded-full bg-[#98c6dc] text-sm text-black">
                {badge}
              </span>
            )}
            {active && <span className="absolute bottom-0 h-1 w-5 rounded-full bg-[#9ccbe0]" />}
            {running && <span className="absolute bottom-0 h-1 w-2 rounded-full bg-[#9b9b9f]" />}
          </button>
        ))}
      </div>
      <div className="mr-6 flex items-center justify-self-end">
        <IconButton icon={ChevronUp} label="Show hidden icons" className="w-[18px]" />
        <IconButton icon={CloudOff} label="OneDrive" className="ml-5 w-[22px]" />
        <button type="button" className="ml-5 w-[34px] text-center leading-5">
          ENG
          <br />
          IN
        </button>
        <button type="button" aria-label="Network, volume and battery" className="ml-5 flex gap-2.5">
          <Wifi />
          <Volume />
          <Battery />
        </button>
        <button type="button" className="ml-5 text-right leading-5 whitespace-nowrap">
          13:22
          <br />
          13-05-2024
        </button>
      </div>
    </footer>
  );
}

export default function App() {
  return (
    <div className="flex min-h-screen flex-col bg-[#f7f7f7] text-sm text-[#161616] [font-family:'Open_Sans','Noto_Sans',sans-serif]">
      <TabStrip />
      <Toolbar />
      <div className="flex flex-1">
        <div className="flex min-w-0 flex-1 flex-col pb-[5px] pl-[5px]">
          <div className="-ml-[5px]">
            <FavoritesBar />
          </div>
          <Page />
        </div>
        <Sidebar />
      </div>
      <Taskbar />
    </div>
  );
}
